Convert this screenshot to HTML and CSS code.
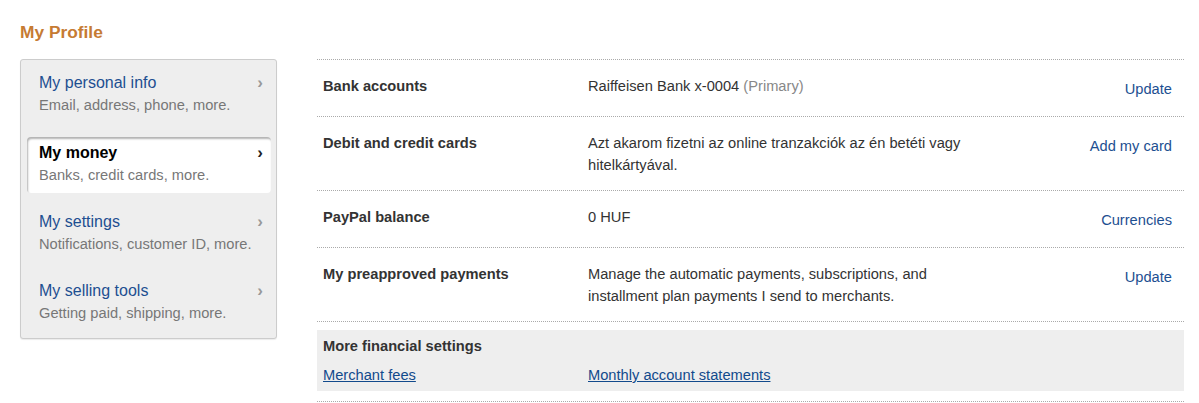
FILE: index.html
```html
<!DOCTYPE html>
<html>
<head>
    <title>My Profile</title>
    <meta charset="UTF-8"/>
    <link rel="stylesheet" href="styles.css">
</head>
<body>
    <h1 class="page-title">My Profile</h1>
    <div class="layout">
        <div class="sidebar">
            <a class="nav-item" href="#">
                <div class="nav-head"><span class="nav-title">My personal info</span><span class="chevron">›</span></div>
                <div class="nav-sub">Email, address, phone, more.</div>
            </a>
            <a class="nav-item active" href="#">
                <div class="nav-head"><span class="nav-title">My money</span><span class="chevron">›</span></div>
                <div class="nav-sub">Banks, credit cards, more.</div>
            </a>
            <a class="nav-item" href="#">
                <div class="nav-head"><span class="nav-title">My settings</span><span class="chevron">›</span></div>
                <div class="nav-sub">Notifications, customer ID, more.</div>
            </a>
            <a class="nav-item" href="#">
                <div class="nav-head"><span class="nav-title">My selling tools</span><span class="chevron">›</span></div>
                <div class="nav-sub">Getting paid, shipping, more.</div>
            </a>
        </div>
        <div class="content">
            <div class="rows">
                <div class="row">
                    <div class="label">Bank accounts</div>
                    <div class="value">Raiffeisen Bank x-0004 <span class="muted">(Primary)</span></div>
                    <div class="action"><a href="#">Update</a></div>
                </div>
                <div class="row">
                    <div class="label">Debit and credit cards</div>
                    <div class="value">Azt akarom fizetni az online tranzakciók az én betéti vagy hitelkártyával.</div>
                    <div class="action"><a href="#">Add my card</a></div>
                </div>
                <div class="row">
                    <div class="label">PayPal balance</div>
                    <div class="value">0 HUF</div>
                    <div class="action"><a href="#">Currencies</a></div>
                </div>
                <div class="row">
                    <div class="label">My preapproved payments</div>
                    <div class="value">Manage the automatic payments, subscriptions, and installment plan payments I send to merchants.</div>
                    <div class="action"><a href="#">Update</a></div>
                </div>
            </div>
            <div class="more-wrap">
                <div class="more">
                    <div class="more-title">More financial settings</div>
                    <div class="more-links">
                        <a class="label" href="#">Merchant fees</a>
                        <a href="#">Monthly account statements</a>
                    </div>
                </div>
            </div>
        </div>
    </div>
</body>
</html>
```

FILE: styles.css
```css
body {
    margin: 0;
    padding: 21px 15px 0 20px;
    font-family: "Liberation Sans", Arial, sans-serif;
    font-size: 11pt;
    line-height: 22px;
    color: #333;
}
a {
    color: #1d4f91;
    text-decoration: none;
}
.page-title {
    margin: 0 0 16px 0;
    font-size: 13pt;
    line-height: 22px;
    color: #c67b33;
}
.layout {
    display: flex;
    align-items: flex-start;
    gap: 40px;
}

/* left nav */
.sidebar {
    width: 257px;
    box-sizing: border-box;
    flex-shrink: 0;
    background: #eee;
    border: 1px solid #ccc;
    border-radius: 3px;
    box-shadow: 0 1px 1px rgba(0,0,0,0.08);
    padding: 7px 5px 7px 6px;
    display: flex;
    flex-direction: column;
    gap: 13px;
}
.nav-item {
    display: block;
    padding: 5px 8px 7px 12px;
    border-radius: 4px;
}
.nav-item.active {
    margin-top: 1px;
    background: #fff;
    box-shadow: inset 1px 2px 2px rgba(0,0,0,0.3);
}
.nav-head {
    display: flex;
    justify-content: space-between;
    align-items: center;
}
.nav-title {
    font-size: 12pt;
    color: #1d4f91;
}
.active .nav-title {
    color: #000;
    font-weight: bold;
}
.chevron {
    font-size: 17px;
    font-weight: bold;
    color: #999;
}
.active .chevron {
    color: #222;
}
.nav-sub {
    color: #777;
}

/* right side */
.content {
    flex: 1;
}
.rows {
    border-top: 1px dotted #aaa;
}
.row {
    display: flex;
    padding: 15px 12px 14px 6px;
    min-height: 27px;
    border-bottom: 1px dotted #aaa;
}
.label {
    width: 265px;
    flex-shrink: 0;
    font-weight: bold;
}
.value {
    width: 400px;
}
.muted {
    color: #888;
}
.action {
    flex: 1;
    text-align: right;
    padding-top: 3px;
}
.more-wrap {
    padding: 8px 0 10px 0;
    border-bottom: 1px dotted #aaa;
}
.more {
    background: #eee;
    padding: 5px 6px 5px 6px;
}
.more-title {
    font-weight: bold;
    margin-bottom: 7px;
}
.more-links {
    display: flex;
}
.more-links a {
    text-decoration: underline;
    color: #124a8c;
}
.more-links .label {
    font-weight: normal;
}
```
